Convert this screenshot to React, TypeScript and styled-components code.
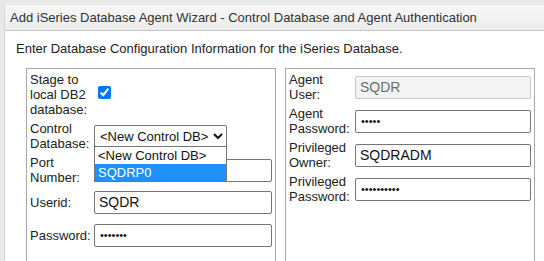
import React from "react";
import styled, { createGlobalStyle } from "styled-components";

const Global = createGlobalStyle`
  html, body { margin: 0; padding: 0; background: #e8e8e8; overflow: hidden; height: 100%; }
  body { font-family: "Liberation Sans", Arial, sans-serif; font-size: 13px; color: #222; }
`;

const Panel = styled.div`
  margin: 5px 0 0 4px;
  width: 560px;
  height: calc(100vh - 5px);
  overflow: hidden;
  background: #fff;
  border-left: 1px solid #d4d4d4;
  box-sizing: border-box;
`;

const TitleBar = styled.div`
  height: 25px;
  display: flex;
  align-items: center;
  padding-left: 5px;
  background: linear-gradient(#f7f7f7, #ececec);
  border-bottom: 1px solid #c6c6c6;
  color: #333;
  font-size: 13px;
`;

const Content = styled.div`
  padding: 10px 0 0 11px;
`;

const Intro = styled.div`
  line-height: 16px;
  margin-bottom: 11px;
  color: #222;
`;

const Columns = styled.div`
  display: flex;
  gap: 9px;
  margin-left: 10px;
`;

const Box = styled.div<{ $w: number; $pt: number }>`
  position: relative;
  width: ${(p) => p.$w}px;
  height: 200px;
  box-sizing: border-box;
  border: 1px solid #a9a9a9;
  padding: ${(p) => p.$pt}px 3px 0 3px;
  display: flex;
  flex-direction: column;
  gap: 2px;
`;

const Row = styled.div<{ $h: number; $label: number }>`
  height: ${(p) => p.$h}px;
  display: grid;
  grid-template-columns: ${(p) => p.$label}px 1fr;
  align-items: center;
`;

const Label = styled.div`
  line-height: 15px;
  color: #222;
`;

const TextInput = styled.input`
  box-sizing: border-box;
  width: 100%;
  height: 23px;
  border: 1px solid #767676;
  border-radius: 2px;
  padding: 1px 4px;
  font-family: "Liberation Sans", Arial, sans-serif;
  font-size: 14px;
  color: #111;
  background: #fff;
  outline: none;
  &[type="password"] {
    font-size: 11px;
    padding-left: 5px;
  }
  &:disabled {
    background: #f3f3f3;
    border-color: #c8c8c8;
    color: #6d6d6d;
  }
`;

const Check = styled.input`
  width: 13px;
  height: 13px;
  margin: 0 0 0 4px;
  accent-color: #0075ff;
`;

const SelectWrap = styled.div`
  position: relative;
  width: 133px;
`;

const Select = styled.select`
  box-sizing: border-box;
  width: 133px;
  height: 22px;
  border: 1px solid #767676;
  border-radius: 2px;
  font-family: "Liberation Sans", Arial, sans-serif;
  font-size: 13px;
  color: #111;
  background: #fff;
  padding: 0 0 0 1px;
`;

const DropList = styled.div`
  position: absolute;
  left: 0;
  top: 21px;
  width: 133px;
  box-sizing: border-box;
  border: 1px solid #767676;
  background: #fff;
  z-index: 2;
`;

const Option = styled.div<{ $active?: boolean }>`
  height: 17px;
  line-height: 17px;
  padding-left: 3px;
  font-size: 13px;
  background: ${(p) => (p.$active ? "#1e90ff" : "#fff")};
  color: ${(p) => (p.$active ? "#fff" : "#111")};
`;

export default function App() {
  return (
    <>
      <Global />
      <Panel>
        <TitleBar>
          Add iSeries Database Agent Wizard - Control Database and Agent Authentication
        </TitleBar>
        <Content>
          <Intro>Enter Database Configuration Information for the iSeries Database.</Intro>
          <Columns>
            <Box $w={250} $pt={1}>
              <Row $h={48} $label={64}>
                <Label>
                  Stage to
                  <br />
                  local DB2
                  <br />
                  database:
                </Label>
                <div>
                  <Check type="checkbox" defaultChecked />
                </div>
              </Row>
              <Row $h={32} $label={64}>
                <Label>
                  Control
                  <br />
                  Database:
                </Label>
                <SelectWrap>
                  <Select defaultValue="new">
                    <option value="new">&lt;New Control DB&gt;</option>
                    <option value="p0">SQDRP0</option>
                  </Select>
                  <DropList>
                    <Option>&lt;New Control DB&gt;</Option>
                    <Option $active>SQDRP0</Option>
                  </DropList>
                </SelectWrap>
              </Row>
              <Row $h={32} $label={64}>
                <Label>
                  Port
                  <br />
                  Number:
                </Label>
                <TextInput defaultValue="" />
              </Row>
              <Row $h={28} $label={64}>
                <Label>Userid:</Label>
                <TextInput defaultValue="SQDR" />
              </Row>
              <Row $h={34} $label={64}>
                <Label>Password:</Label>
                <TextInput type="password" defaultValue="sqdrpwd" />
              </Row>
            </Box>
            <Box $w={250} $pt={2}>
              <Row $h={32} $label={66}>
                <Label>
                  Agent
                  <br />
                  User:
                </Label>
                <TextInput defaultValue="SQDR" disabled />
              </Row>
              <Row $h={32} $label={66}>
                <Label>
                  Agent
                  <br />
                  Password:
                </Label>
                <TextInput type="password" defaultValue="abcde" />
              </Row>
              <Row $h={32} $label={66}>
                <Label>
                  Privileged
                  <br />
                  Owner:
                </Label>
                <TextInput defaultValue="SQDRADM" />
              </Row>
              <Row $h={32} $label={66}>
                <Label>
                  Privileged
                  <br />
                  Password:
                </Label>
                <TextInput type="password" defaultValue="abcdefghij" />
              </Row>
            </Box>
          </Columns>
        </Content>
      </Panel>
    </>
  );
}
